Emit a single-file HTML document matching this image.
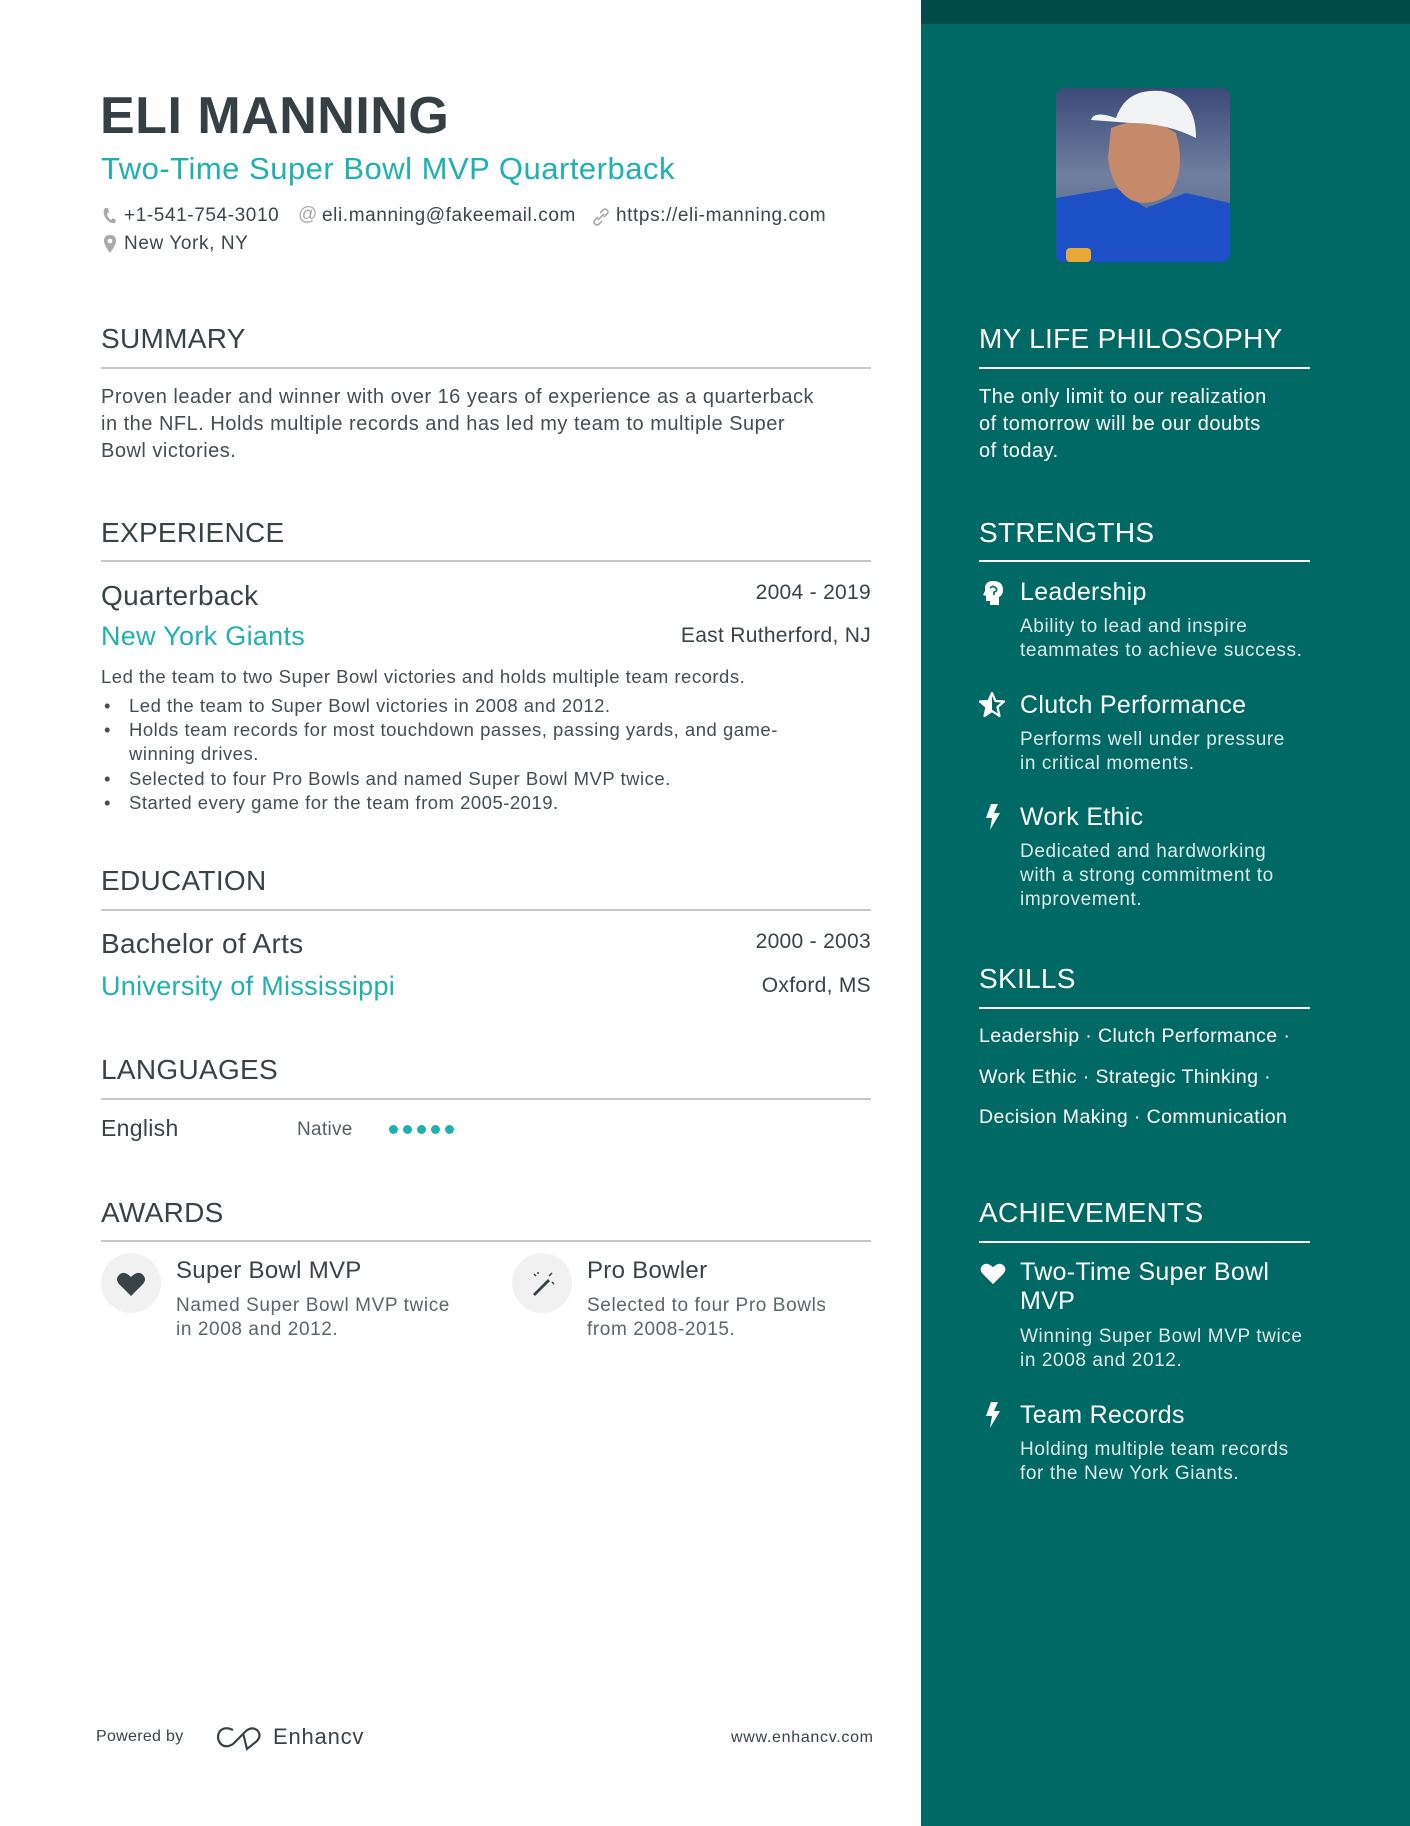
<!DOCTYPE html>
<html><head><meta charset="utf-8"><style>
*{margin:0;padding:0;box-sizing:border-box}
body{width:1410px;height:1826px;position:relative;background:#fff;font-family:"Liberation Sans",sans-serif;color:#384347;overflow:hidden;letter-spacing:0.3px}
.a{position:absolute;white-space:nowrap;line-height:1.2}
.side{position:absolute;left:921px;top:0;width:489px;height:1826px;background:#006966}
.band{position:absolute;left:921px;top:0;width:489px;height:24px;background:#004a4a}
.h{font-size:28px;color:#384347}
.sh{font-size:28px;color:#fff}
.line{position:absolute;height:2px;background:#c8c8c8}
.wl{position:absolute;height:2px;background:#fff}
.b{font-size:20px;color:#444e52}
.w{color:#fff}
.wd{color:#dce9e8;font-size:19px}
.t{color:#1fb0b0}
.dot{position:absolute;width:9px;height:9px;border-radius:50%;background:#1fb0b0;top:1125px}
</style></head><body>
<div class="side"></div><div class="band"></div>

<div class="a" style="left:100px;top:85px;font-size:52px;font-weight:bold;color:#363f44;letter-spacing:0.5px">ELI MANNING</div>
<div class="a t" style="left:101px;top:150px;font-size:31px;letter-spacing:0.5px">Two-Time Super Bowl MVP Quarterback</div>

<svg class="a" style="left:102px;top:207px" width="14" height="18" viewBox="0 0 14 18"><path d="M3 1 L6 1 L7 5 L5 7 Q6 11 9 13 L11 11 L14 13 L13 16 Q6 17 2 8 Q1 4 3 1Z" fill="#aaa"/></svg>
<div class="a" style="left:124px;top:205px;font-size:19px;color:#3c4548;letter-spacing:0.6px">+1-541-754-3010</div>
<div class="a" style="left:298px;top:204px;font-size:19px;color:#aaa">@</div>
<div class="a" style="left:322px;top:205px;font-size:19px;color:#3c4548;letter-spacing:0.6px">eli.manning@fakeemail.com</div>
<svg class="a" style="left:592px;top:208px" width="18" height="18" viewBox="0 0 18 18"><path d="M8 5 L11 2 Q13 0 15 2 Q17 4 15 6 L12 9 M10 13 L7 16 Q5 18 3 16 Q1 14 3 12 L6 9 M6 12 L12 6" stroke="#aaa" stroke-width="1.6" fill="none"/></svg>
<div class="a" style="left:616px;top:205px;font-size:19px;color:#3c4548;letter-spacing:0.6px">https://eli-manning.com</div>
<svg class="a" style="left:104px;top:235px" width="12" height="18" viewBox="0 0 12 18"><path d="M6 0 Q12 0 12 6 Q12 10 6 18 Q0 10 0 6 Q0 0 6 0Z" fill="#aaa"/><circle cx="6" cy="6" r="2.3" fill="#fff"/></svg>
<div class="a" style="left:124px;top:233px;font-size:19px;color:#3c4548;letter-spacing:0.6px">New York, NY</div>

<div class="a h" style="left:101px;top:322px">SUMMARY</div>
<div class="line" style="left:101px;top:367px;width:770px"></div>
<div class="a b" style="left:101px;top:384px;line-height:27px;letter-spacing:0.5px">Proven leader and winner with over 16 years of experience as a quarterback<br>in the NFL. Holds multiple records and has led my team to multiple Super<br>Bowl victories.</div>

<div class="a h" style="left:101px;top:516px">EXPERIENCE</div>
<div class="line" style="left:101px;top:560px;width:770px"></div>
<div class="a" style="left:101px;top:579px;font-size:28px">Quarterback</div>
<div class="a" style="right:539px;top:580px;font-size:21px">2004 - 2019</div>
<div class="a t" style="left:101px;top:620px;font-size:27px">New York Giants</div>
<div class="a" style="right:539px;top:623px;font-size:21px">East Rutherford, NJ</div>
<div class="a" style="left:101px;top:666px;font-size:18.5px;color:#444e52;letter-spacing:0.5px">Led the team to two Super Bowl victories and holds multiple team records.</div>
<div style="position:absolute;left:101px;top:694px;font-size:18.5px;color:#444e52;line-height:24.2px;width:780px;letter-spacing:0.5px">
<div style="padding-left:28px;position:relative"><span style="position:absolute;left:3px">•</span>Led the team to Super Bowl victories in 2008 and 2012.</div>
<div style="padding-left:28px;position:relative"><span style="position:absolute;left:3px">•</span>Holds team records for most touchdown passes, passing yards, and game-<br>winning drives.</div>
<div style="padding-left:28px;position:relative"><span style="position:absolute;left:3px">•</span>Selected to four Pro Bowls and named Super Bowl MVP twice.</div>
<div style="padding-left:28px;position:relative"><span style="position:absolute;left:3px">•</span>Started every game for the team from 2005-2019.</div>
</div>

<div class="a h" style="left:101px;top:864px">EDUCATION</div>
<div class="line" style="left:101px;top:909px;width:770px"></div>
<div class="a" style="left:101px;top:927px;font-size:28px">Bachelor of Arts</div>
<div class="a" style="right:539px;top:929px;font-size:21px">2000 - 2003</div>
<div class="a t" style="left:101px;top:970px;font-size:27px">University of Mississippi</div>
<div class="a" style="right:539px;top:973px;font-size:21px">Oxford, MS</div>

<div class="a h" style="left:101px;top:1053px">LANGUAGES</div>
<div class="line" style="left:101px;top:1098px;width:770px"></div>
<div class="a" style="left:101px;top:1115px;font-size:23px">English</div>
<div class="a" style="left:297px;top:1119px;font-size:19px;color:#555f63">Native</div>
<div class="dot" style="left:389px"></div><div class="dot" style="left:403px"></div><div class="dot" style="left:417px"></div><div class="dot" style="left:431px"></div><div class="dot" style="left:445px"></div>

<div class="a h" style="left:101px;top:1196px">AWARDS</div>
<div class="line" style="left:101px;top:1240px;width:770px"></div>
<div style="position:absolute;left:101px;top:1253px;width:60px;height:60px;border-radius:50%;background:#f1f1f1"></div>
<svg class="a" style="left:116px;top:1271px" width="30" height="26" viewBox="0 0 30 26"><path d="M15 25 L3 13 Q-1 8 3 4 Q8 -1 15 6 Q22 -1 27 4 Q31 8 27 13Z" fill="#384347"/></svg>
<div class="a" style="left:176px;top:1257px;font-size:24px">Super Bowl MVP</div>
<div class="a" style="left:176px;top:1294px;font-size:19px;color:#5c6569;line-height:24px;letter-spacing:0.6px">Named Super Bowl MVP twice<br>in 2008 and 2012.</div>
<div style="position:absolute;left:512px;top:1253px;width:60px;height:60px;border-radius:50%;background:#f1f1f1"></div>
<svg class="a" style="left:528px;top:1268px" width="30" height="30" viewBox="0 0 30 30"><path d="M5 26 L20 11 L22 13 L7 28Z" fill="#384347"/><path d="M21 8 L24 5 M6 6 L8 8 M10 4 L10 6 M24 14 L26 16" stroke="#384347" stroke-width="1.5"/></svg>
<div class="a" style="left:587px;top:1257px;font-size:24px">Pro Bowler</div>
<div class="a" style="left:587px;top:1294px;font-size:19px;color:#5c6569;line-height:24px;letter-spacing:0.6px">Selected to four Pro Bowls<br>from 2008-2015.</div>

<div class="a" style="left:96px;top:1727px;font-size:16px;color:#384347">Powered by</div>
<svg class="a" style="left:215px;top:1725px" width="50" height="26" viewBox="0 0 50 26"><path d="M18 5 Q10 1 5 6 Q1 12 5 18 Q10 24 18 19 L30 7 Q36 1 42 5 Q47 10 42 16 L32 24 L28 8" stroke="#384347" stroke-width="2.2" fill="none"/></svg>
<div class="a" style="left:273px;top:1724px;font-size:22px;color:#384347;letter-spacing:0.8px">Enhancv</div>
<div class="a" style="left:731px;top:1728px;font-size:16px;color:#384347;letter-spacing:0.7px">www.enhancv.com</div>

<svg class="a" style="left:1056px;top:88px" width="174" height="174" viewBox="0 0 174 174">
<defs><clipPath id="c"><rect width="174" height="174" rx="8"/></clipPath>
<linearGradient id="bg" x1="0" y1="0" x2="0" y2="1"><stop offset="0" stop-color="#3b4a78"/><stop offset="0.5" stop-color="#6f7fa0"/><stop offset="1" stop-color="#58628a"/></linearGradient></defs>
<g clip-path="url(#c)">
<rect width="174" height="174" fill="url(#bg)"/>
<path d="M0 110 L60 100 L90 120 L130 105 L174 115 L174 174 L0 174Z" fill="#1d4fc6"/>
<path d="M55 40 Q90 25 120 45 Q130 80 115 105 Q95 120 75 112 Q55 100 52 70Z" fill="#c48a6a"/>
<path d="M60 30 Q70 0 105 3 Q140 8 140 50 Q110 35 75 35 L35 32 Q38 22 60 30Z" fill="#f2f3f5"/>
<rect x="10" y="160" width="25" height="14" rx="4" fill="#e8a838"/>
</g></svg>

<div class="a sh" style="left:979px;top:322px">MY LIFE PHILOSOPHY</div>
<div class="wl" style="left:979px;top:367px;width:331px"></div>
<div class="a w" style="left:979px;top:384px;font-size:20px;line-height:27px;letter-spacing:0.5px">The only limit to our realization<br>of tomorrow will be our doubts<br>of today.</div>

<div class="a sh" style="left:979px;top:516px">STRENGTHS</div>
<div class="wl" style="left:979px;top:560px;width:331px"></div>
<svg class="a" style="left:981px;top:580px" width="24" height="26" viewBox="0 0 24 26"><path d="M12 1 Q22 1 22 10 Q22 15 18 17 L18 25 L9 25 L9 21 L5 21 L5 16 L2 15 L4 11 Q3 1 12 1Z" fill="#fff"/><path d="M9 8 Q12 5 15 8 Q17 11 13 12 L13 15" stroke="#006966" stroke-width="1.6" fill="none"/></svg>
<div class="a w" style="left:1020px;top:577px;font-size:25px">Leadership</div>
<div class="a wd" style="left:1020px;top:615px;line-height:24px;letter-spacing:0.6px">Ability to lead and inspire<br>teammates to achieve success.</div>
<svg class="a" style="left:979px;top:692px" width="26" height="25" viewBox="0 0 26 25"><path d="M13 1 L16.5 9 L25 9.5 L18.5 15 L20.5 24 L13 19 L5.5 24 L7.5 15 L1 9.5 L9.5 9Z" fill="none" stroke="#fff" stroke-width="2.2" stroke-linejoin="round"/><path d="M13 1 L9.5 9 L1 9.5 L7.5 15 L5.5 24 L13 19Z" fill="#fff"/></svg>
<div class="a w" style="left:1020px;top:690px;font-size:25px">Clutch Performance</div>
<div class="a wd" style="left:1020px;top:728px;line-height:24px;letter-spacing:0.6px">Performs well under pressure<br>in critical moments.</div>
<svg class="a" style="left:985px;top:804px" width="16" height="26" viewBox="0 0 16 26"><path d="M6 0 L13 0 L9 9 L15 9 L5 26 L7 14 L1 14Z" fill="#fff"/></svg>
<div class="a w" style="left:1020px;top:802px;font-size:25px">Work Ethic</div>
<div class="a wd" style="left:1020px;top:840px;line-height:24px;letter-spacing:0.6px">Dedicated and hardworking<br>with a strong commitment to<br>improvement.</div>

<div class="a sh" style="left:979px;top:962px">SKILLS</div>
<div class="wl" style="left:979px;top:1007px;width:331px"></div>
<div class="a w" style="left:979px;top:1016px;font-size:19.5px;line-height:40.5px;letter-spacing:0.4px">Leadership · Clutch Performance ·<br>Work Ethic · Strategic Thinking ·<br>Decision Making · Communication</div>

<div class="a sh" style="left:979px;top:1196px">ACHIEVEMENTS</div>
<div class="wl" style="left:979px;top:1241px;width:331px"></div>
<svg class="a" style="left:979px;top:1262px" width="28" height="23" viewBox="0 0 30 26"><path d="M15 25 L3 13 Q-1 8 3 4 Q8 -1 15 6 Q22 -1 27 4 Q31 8 27 13Z" fill="#fff"/></svg>
<div class="a w" style="left:1020px;top:1258px;font-size:25px;line-height:29px">Two-Time Super Bowl<br>MVP</div>
<div class="a wd" style="left:1020px;top:1325px;line-height:24px;letter-spacing:0.6px">Winning Super Bowl MVP twice<br>in 2008 and 2012.</div>
<svg class="a" style="left:985px;top:1402px" width="16" height="26" viewBox="0 0 16 26"><path d="M6 0 L13 0 L9 9 L15 9 L5 26 L7 14 L1 14Z" fill="#fff"/></svg>
<div class="a w" style="left:1020px;top:1400px;font-size:25px">Team Records</div>
<div class="a wd" style="left:1020px;top:1438px;line-height:24px;letter-spacing:0.6px">Holding multiple team records<br>for the New York Giants.</div>
</body></html>
